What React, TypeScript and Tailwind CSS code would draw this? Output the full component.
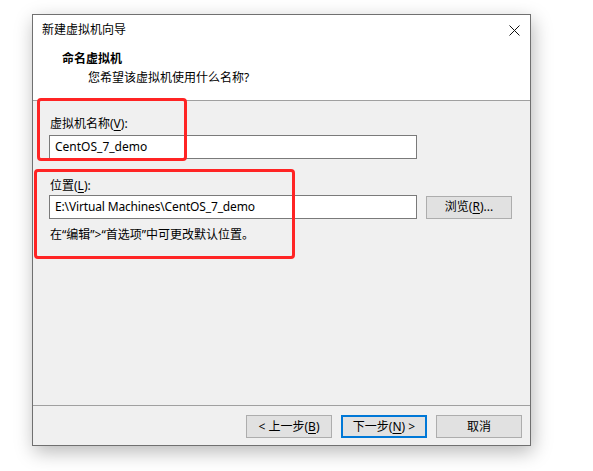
import React from "react";

const font = { fontFamily: '"Noto Sans", "Noto Sans CJK SC", sans-serif' };

function U({ children }: { children: React.ReactNode }) {
  return <span className="underline underline-offset-2">{children}</span>;
}

export default function App() {
  return (
    <div className="w-[593px] h-[471px] bg-white pt-[14px] pl-[32px] text-[12px] text-black" style={font}>
      <div className="relative w-[499px] h-[432px] border border-[#707070] bg-white flex flex-col shadow-[2px_6px_18px_rgba(0,0,0,0.28)]">
        {/* title + header */}
        <div className="h-[85px] bg-white flex flex-col">
          <div className="h-[29px] flex items-center justify-between pl-[9px] pr-[10px]">
            <span className="leading-[16px]">新建虚拟机向导</span>
            <svg width="11" height="11" viewBox="0 0 11 11" className="mt-[1px]">
              <path d="M0.5 0.5 L10.5 10.5 M10.5 0.5 L0.5 10.5" stroke="#111" strokeWidth="1" fill="none" />
            </svg>
          </div>
          <div className="pl-[29px] mt-[7px] font-bold leading-[16px]">命名虚拟机</div>
          <div className="pl-[55px] mt-[3px] leading-[16px]">您希望该虚拟机使用什么名称?</div>
        </div>
        <div className="h-px bg-[#a0a0a0]" />
        {/* body */}
        <div className="flex-1 bg-[#f0f0f0] px-[16px] pt-[15px]">
          <div className="leading-[16px] pl-[1px]">
            虚拟机名称(<U>V</U>):
          </div>
          <div className="mt-[3px] w-[368px] h-[24px] border border-[#7a7a7a] bg-white flex items-center pl-[5px] leading-[16px]">
            CentOS_7_demo
          </div>
          <div className="mt-[19px] leading-[16px] pl-[1px]">
            位置(<U>L</U>):
          </div>
          <div className="mt-[1px] flex items-center gap-[9px]">
            <div className="w-[368px] h-[24px] border border-[#7a7a7a] bg-white flex items-center pl-[5px] leading-[16px] tracking-[-0.15px]">
              E:\Virtual Machines\CentOS_7_demo
            </div>
            <div className="w-[86px] h-[23px] border border-[#adadad] bg-[#e1e1e1] flex items-center justify-center leading-[16px]">
              浏览(<U>R</U>)...
            </div>
          </div>
          <div className="mt-[8px] leading-[16px] pl-[1px]">在“编辑”&gt;“首选项”中可更改默认位置。</div>
        </div>
        <div className="h-px bg-[#a0a0a0]" />
        {/* footer */}
        <div className="h-[39px] bg-[#f0f0f0] flex items-start justify-end gap-[9px] pr-[8px] pt-[9px]">
          <div className="w-[86px] h-[23px] border border-[#adadad] bg-[#e1e1e1] flex items-center justify-center leading-[16px]">
            &lt; 上一步(<U>B</U>)
          </div>
          <div className="w-[86px] h-[23px] border-2 border-[#0078d7] bg-[#e1e1e1] flex items-center justify-center leading-[16px]">
            下一步(<U>N</U>) &gt;
          </div>
          <div className="w-[86px] h-[23px] border border-[#adadad] bg-[#e1e1e1] flex items-center justify-center leading-[16px]">
            取消
          </div>
        </div>

        {/* red annotation boxes */}
        <div className="absolute left-[4px] top-[83px] w-[150px] h-[63px] border-[3px] border-[#ff2424] rounded-[4px]" />
        <div className="absolute left-[1px] top-[154px] w-[261px] h-[90px] border-[3px] border-[#ff2424] rounded-[4px]" />
      </div>
    </div>
  );
}
